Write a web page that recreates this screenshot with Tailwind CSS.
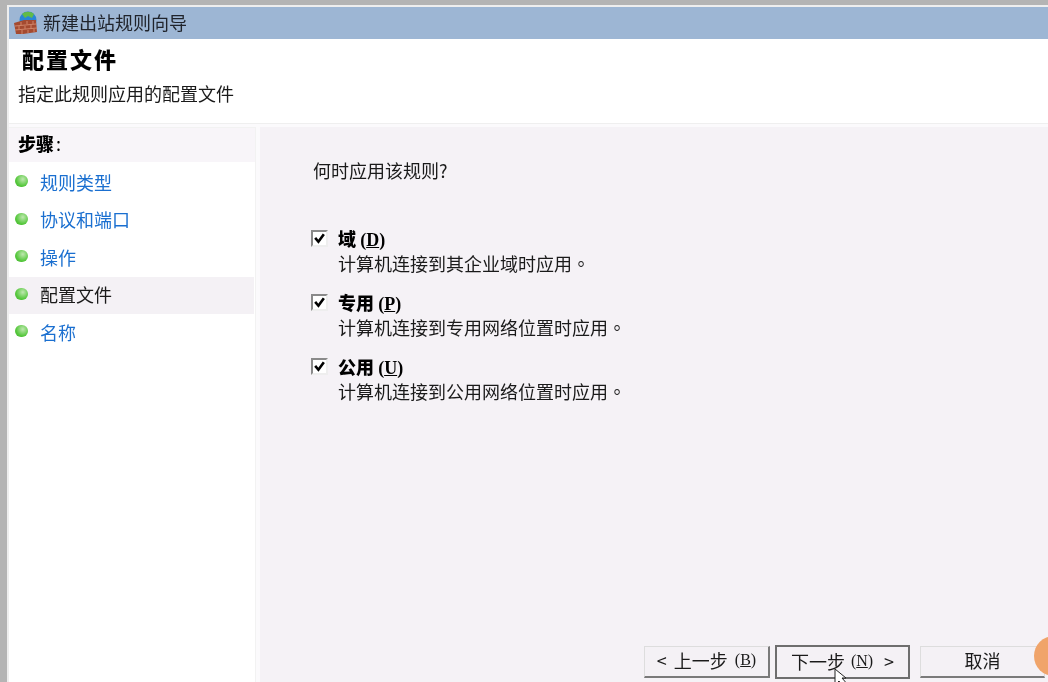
<!DOCTYPE html>
<html lang="zh-CN">
<head>
  <meta charset="utf-8" />
  <title>新建出站规则向导</title>
  <script src="https://cdn.jsdelivr.net/npm/@tailwindcss/browser@4"></script>
</head>
<body class="w-[1048px] h-[682px] overflow-hidden bg-[#b4b4b4] text-[18px] leading-[24px] text-[#1a1a1a] font-['Noto_Sans_CJK_SC','Liberation_Sans',sans-serif]">
  <div class="relative h-[682px] overflow-hidden pt-[5px] pl-[7px] blur-[0.4px]">
    <div class="h-[677px] bg-[#fbfafc] border-l-2 border-t-2 border-[#eeeeee] flex flex-col">

      <!-- title bar -->
      <div class="h-[32px] shrink-0 bg-[#9db6d4] flex items-center pl-[5px] gap-[5px]">
        <svg width="24" height="26" viewBox="0 0 24 26">
          <circle cx="14" cy="10" r="8.5" fill="#2a86d6"/>
          <path d="M8 4c3-3 9-3 12 0l-2 4-4-2-3 2z" fill="#62bb48"/>
          <path d="M0 13 L10 10 L22 10 L23 22 L9 24 L2 24 Z" fill="#a44a30"/>
          <path d="M1 16 L22 14 M1 20 L23 18 M7 12 L7 15 M13 11 L13 14 M19 11 L19 14 M5 16 L5 20 M11 16 L11 19 M17 15 L17 19 M8 20 L8 24 M14 20 L14 23 M20 19 L20 22" stroke="#d08468" stroke-width="1" fill="none"/>
        </svg>
        <span class="text-[#20242c] mb-[3px]">新建出站规则向导</span>
      </div>

      <!-- header -->
      <div class="h-[85px] shrink-0 bg-white border-b border-[#efefef] pl-[9px]">
        <div class="pl-[4px] pt-[5px] h-[41px] text-[22px] leading-[28px] font-black tracking-[2px] text-black">配置文件</div>
        <div class="leading-[26px]">指定此规则应用的配置文件</div>
      </div>

      <div class="flex-1 flex pt-[3px] gap-[4px] min-h-0">
        <!-- sidebar -->
        <div class="w-[247px] shrink-0 bg-white border-t border-r border-[#f2f2f2]">
          <div class="h-[34px] bg-[#f8f5f9] pl-[9px] pb-[4px] flex items-center font-black text-black">步骤<span class="font-normal pl-[2px]">:</span></div>
          <ul class="pt-[2px] w-[245px]">
            <li class="h-[37.5px] flex items-center gap-[12px] pl-[6px] text-[#1a6fd0]"><i class="w-[13px] h-[12px] -mt-[3px] rounded-full bg-[radial-gradient(circle_at_60%_35%,#bfe8b0,#57c83e_60%,#3fae2c)]"></i><span class="mb-[2px]">规则类型</span></li>
            <li class="h-[37.5px] flex items-center gap-[12px] pl-[6px] text-[#1a6fd0]"><i class="w-[13px] h-[12px] -mt-[3px] rounded-full bg-[radial-gradient(circle_at_60%_35%,#bfe8b0,#57c83e_60%,#3fae2c)]"></i><span class="mb-[2px]">协议和端口</span></li>
            <li class="h-[37.5px] flex items-center gap-[12px] pl-[6px] text-[#1a6fd0]"><i class="w-[13px] h-[12px] -mt-[3px] rounded-full bg-[radial-gradient(circle_at_60%_35%,#bfe8b0,#57c83e_60%,#3fae2c)]"></i><span class="mb-[2px]">操作</span></li>
            <li class="h-[37.5px] flex items-center gap-[12px] pl-[6px] bg-[#f4f1f5]"><i class="w-[13px] h-[12px] -mt-[3px] rounded-full bg-[radial-gradient(circle_at_60%_35%,#bfe8b0,#57c83e_60%,#3fae2c)]"></i><span class="mb-[2px]">配置文件</span></li>
            <li class="h-[37.5px] flex items-center gap-[12px] pl-[6px] text-[#1a6fd0]"><i class="w-[13px] h-[12px] -mt-[3px] rounded-full bg-[radial-gradient(circle_at_60%_35%,#bfe8b0,#57c83e_60%,#3fae2c)]"></i><span class="mb-[2px]">名称</span></li>
          </ul>
        </div>

        <!-- content -->
        <div class="flex-1 bg-[#f5f2f6] pl-[51px] pt-[31px] relative">
          <p class="ml-[2px]">何时应用该规则?</p>
          <div class="mt-[44px] flex flex-col gap-[14px]">
            <div class="flex gap-[10px]">
              <span class="w-[17px] h-[17px] mt-[4px] bg-white border-2 border-t-[#8a8a8a] border-l-[#8a8a8a] border-r-[#eeeeee] border-b-[#eeeeee] flex items-center justify-center"><svg width="13" height="13" viewBox="0 0 12 12" class="shrink-0"><path d="M2 5.5 L5 9 L10 2" fill="none" stroke="#000" stroke-width="2.4"/></svg></span>
              <div><div class="h-[24px] font-black text-black">域 <span class="font-['Liberation_Serif'] font-bold">(<u>D</u>)</span></div><div class="leading-[26px]">计算机连接到其企业域时应用<span lang="zh-TW" class="font-['Noto_Sans_CJK_TC']">。</span></div></div>
            </div>
            <div class="flex gap-[10px]">
              <span class="w-[17px] h-[17px] mt-[4px] bg-white border-2 border-t-[#8a8a8a] border-l-[#8a8a8a] border-r-[#eeeeee] border-b-[#eeeeee] flex items-center justify-center"><svg width="13" height="13" viewBox="0 0 12 12" class="shrink-0"><path d="M2 5.5 L5 9 L10 2" fill="none" stroke="#000" stroke-width="2.4"/></svg></span>
              <div><div class="h-[24px] font-black text-black">专用 <span class="font-['Liberation_Serif'] font-bold">(<u>P</u>)</span></div><div class="leading-[26px]">计算机连接到专用网络位置时应用<span lang="zh-TW" class="font-['Noto_Sans_CJK_TC']">。</span></div></div>
            </div>
            <div class="flex gap-[10px]">
              <span class="w-[17px] h-[17px] mt-[4px] bg-white border-2 border-t-[#8a8a8a] border-l-[#8a8a8a] border-r-[#eeeeee] border-b-[#eeeeee] flex items-center justify-center"><svg width="13" height="13" viewBox="0 0 12 12" class="shrink-0"><path d="M2 5.5 L5 9 L10 2" fill="none" stroke="#000" stroke-width="2.4"/></svg></span>
              <div><div class="h-[24px] font-black text-black">公用 <span class="font-['Liberation_Serif'] font-bold">(<u>U</u>)</span></div><div class="leading-[26px]">计算机连接到公用网络位置时应用<span lang="zh-TW" class="font-['Noto_Sans_CJK_TC']">。</span></div></div>
            </div>
          </div>

          <!-- buttons -->
          <div class="absolute left-[384px] top-[519px] flex">
            <button class="w-[126px] h-[32px] pb-[3px] bg-[#f4f1f5] border border-[#dddddd] border-b-2 border-r-2 border-b-[#7a7a7a] border-r-[#7a7a7a] flex items-center justify-center gap-[7px]"><span>&lt;</span><span>上一步</span><span class="font-['Liberation_Serif'] text-[16px]">(<u>B</u>)</span></button>
            <button class="ml-[5px] w-[135px] h-[34px] pb-[3px] -mt-[1px] bg-[#f4f1f5] border-2 border-[#6e6e6e] flex items-center justify-center gap-[6px]"><span>下一步</span><span class="font-['Liberation_Serif'] text-[16px]">(<u>N</u>)</span><span class="ml-[5px]">&gt;</span></button>
            <button class="ml-[10px] w-[125px] h-[32px] pb-[3px] bg-[#f4f1f5] border border-[#dddddd] border-b-2 border-b-[#7a7a7a]">取消</button>
          </div>
        </div>
      </div>
    </div>

    <!-- orange badge at screen edge, and mouse pointer -->
    <div class="absolute left-[1034px] top-[636px] w-[40px] h-[40px] rounded-full bg-[#f0a46a]"></div>
    <svg class="absolute left-[834px] top-[669px]" width="16" height="16" viewBox="0 0 16 16"><path d="M1 0 L1 16 L5 12 L8 16 L14 16 L8 9 L12 9 Z" fill="#fff" stroke="#222" stroke-width="1"/></svg>
  </div>
</body>
</html>
